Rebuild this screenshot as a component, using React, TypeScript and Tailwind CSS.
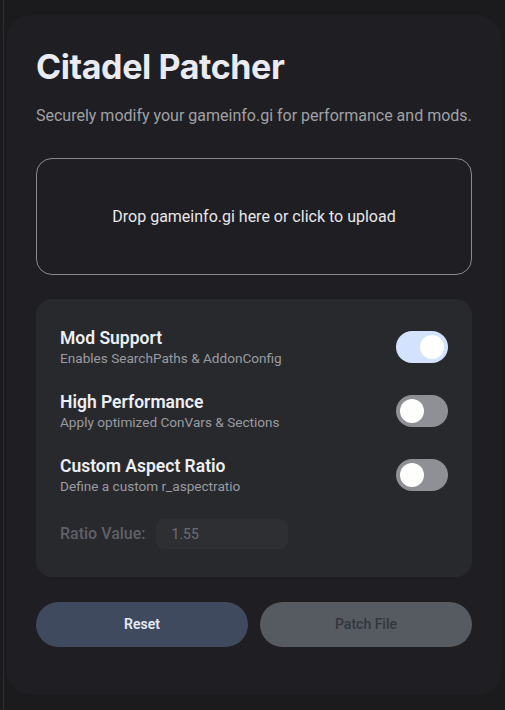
import React from "react";

function Toggle({ on }: { on: boolean }) {
  return (
    <div
      className={
        "flex h-[32px] w-[52px] shrink-0 items-center rounded-full px-[4px] " +
        (on ? "justify-end bg-[#d3e3fd]" : "justify-start bg-[#8e9096]")
      }
    >
      <div className="h-[24px] w-[24px] rounded-full bg-[#fefefc]" />
    </div>
  );
}

function Row({ title, desc, on }: { title: string; desc: string; on: boolean }) {
  return (
    <div className="flex h-[64px] items-center justify-between">
      <div className="flex flex-col">
        <div className="text-[17.5px] font-semibold leading-[22px] text-[#eceef2]">{title}</div>
        <div className="text-[13.6px] leading-[18px] text-[#9a9ba0]">{desc}</div>
      </div>
      <Toggle on={on} />
    </div>
  );
}

export default function App() {
  return (
    <div
      className="min-h-[710px] w-full bg-[#1b1b1e] pl-[3px]"
      style={{ fontFamily: "Roboto, 'Liberation Sans', sans-serif" }}
    >
      <div className="min-h-[710px] border-l border-[#28302f] pl-[2px] pr-[3px] pt-[15px] pb-[15px]">
        <div className="flex h-[680px] flex-col rounded-[26px] bg-[#1f1e22] px-[30px] pt-[32px]">
          <h1
            className="text-[34px] font-bold leading-[40px] tracking-[-0.4px] text-[#e9ebf0]"
            style={{ fontFamily: "Inter, 'Liberation Sans', sans-serif" }}
          >
            Citadel Patcher
          </h1>
          <p className="mt-[19px] text-[16px] leading-[20px] text-[#a0a1a6]">
            Securely modify your gameinfo.gi for performance and mods.
          </p>
          <div className="mt-[32px] flex h-[117px] items-center justify-center rounded-[16px] border border-[#8a8a90]">
            <span className="text-[16px] text-[#e6e7eb]">Drop gameinfo.gi here or click to upload</span>
          </div>
          <div className="mt-[24px] flex flex-col rounded-[16px] bg-[#28292d] px-[24px] pt-[16px] pb-[28px]">
            <Row title="Mod Support" desc="Enables SearchPaths & AddonConfig" on={true} />
            <Row title="High Performance" desc="Apply optimized ConVars & Sections" on={false} />
            <Row title="Custom Aspect Ratio" desc="Define a custom r_aspectratio" on={false} />
            <div className="mt-[12px] flex items-center gap-[10px]">
              <span className="text-[16px] font-medium text-[#5f6065]">Ratio Value:</span>
              <div className="flex h-[30px] w-[132px] items-center rounded-[8px] bg-[#2e2f33] px-[16px]">
                <span className="text-[14px] text-[#6c6d72]">1.55</span>
              </div>
            </div>
          </div>
          <div className="mt-[25px] grid grid-cols-2 gap-[12px]">
            <button className="h-[45px] rounded-full bg-[#404a5e] text-[14px] font-semibold text-[#e6eaf5]">
              Reset
            </button>
            <button className="h-[45px] rounded-full bg-[#565a61] text-[14px] font-medium text-[#34363b]">
              Patch File
            </button>
          </div>
        </div>
      </div>
    </div>
  );
}
